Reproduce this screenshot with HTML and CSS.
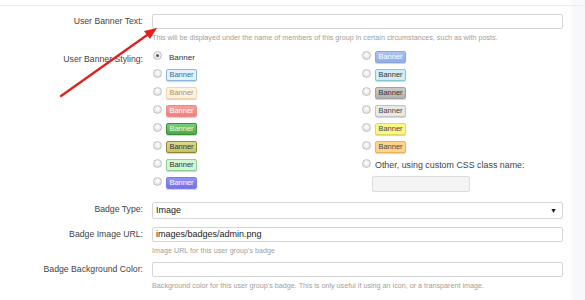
FILE: index.html
```html
<!DOCTYPE html>
<html>
<head>
<meta charset="utf-8">
<link rel="stylesheet" href="styles.css">
</head>
<body>
<div class="page">
  <div class="form">
    <div class="row r-text">
      <div class="label">User Banner Text:</div>
      <div class="ctrl">
        <div class="input"></div>
        <div class="hint">This will be displayed under the name of members of this group in certain circumstances, such as with posts.</div>
      </div>
    </div>
    <div class="row r-style">
      <div class="label">User Banner Styling:</div>
      <div class="ctrl">
        <div class="banners">
          <div class="col">
            <div class="opt"><span class="radio on"></span><span class="plain">Banner</span></div>
            <div class="opt"><span class="radio"></span><span class="bn b-lblue">Banner</span></div>
            <div class="opt"><span class="radio"></span><span class="bn b-peach">Banner</span></div>
            <div class="opt"><span class="radio"></span><span class="bn b-red">Banner</span></div>
            <div class="opt"><span class="radio"></span><span class="bn b-green">Banner</span></div>
            <div class="opt"><span class="radio"></span><span class="bn b-olive">Banner</span></div>
            <div class="opt"><span class="radio"></span><span class="bn b-lgreen">Banner</span></div>
            <div class="opt"><span class="radio"></span><span class="bn b-violet">Banner</span></div>
          </div>
          <div class="col">
            <div class="opt"><span class="radio"></span><span class="bn b-sky">Banner</span></div>
            <div class="opt"><span class="radio"></span><span class="bn b-cyan">Banner</span></div>
            <div class="opt"><span class="radio"></span><span class="bn b-grey">Banner</span></div>
            <div class="opt"><span class="radio"></span><span class="bn b-lgrey">Banner</span></div>
            <div class="opt"><span class="radio"></span><span class="bn b-yellow">Banner</span></div>
            <div class="opt"><span class="radio"></span><span class="bn b-orange">Banner</span></div>
            <div class="opt"><span class="radio"></span><span class="other">Other, using custom CSS class name:</span></div>
            <div class="custom"></div>
          </div>
        </div>
      </div>
    </div>
    <div class="row r-type">
      <div class="label">Badge Type:</div>
      <div class="ctrl">
        <div class="input select"><span>Image</span><span class="caret">&#9660;</span></div>
      </div>
    </div>
    <div class="row r-url">
      <div class="label">Badge Image URL:</div>
      <div class="ctrl">
        <div class="input"><span>images/badges/admin.png</span></div>
        <div class="hint">Image URL for this user group's badge</div>
      </div>
    </div>
    <div class="row r-color">
      <div class="label">Badge Background Color:</div>
      <div class="ctrl">
        <div class="input"></div>
        <div class="hint">Background color for this user group's badge. This is only useful if using an icon, or a transparent image.</div>
      </div>
    </div>
  </div>
  <svg class="arrow" width="585" height="300" viewBox="0 0 585 300">
    <line x1="61" y1="96" x2="150" y2="33" stroke="#e0201e" stroke-width="2.2" stroke-linecap="round"/>
    <polygon points="157,28 144,31 150,39" fill="#e0201e"/>
  </svg>
</div>
</body>
</html>
```
FILE: styles.css
```css
html, body {
  margin: 0;
  padding: 0;
}
body {
  width: 585px;
  height: 300px;
  overflow: hidden;
  background: #ffffff;
  font-family: "Liberation Sans", Arial, sans-serif;
  color: #333;
}
.page {
  position: relative;
  width: 585px;
  height: 300px;
  background: linear-gradient(to right, #ffffff 0, #ffffff 568px, #f7f8fb 575px, #f7f8fb 585px);
}
.page::before {
  content: "";
  display: block;
  height: 5px;
  border-bottom: 1px solid #e6eef3;
}
.form {
  width: 563px;
}
.row {
  display: grid;
  grid-template-columns: 143px 1fr;
  column-gap: 9px;
}
.label {
  text-align: right;
  font-size: 8.7px;
  color: #444;
  line-height: 15px;
}
.input {
  height: 13px;
  border: 1px solid #d6d6d6;
  border-radius: 2px;
  background: #fff;
  font-size: 9px;
  line-height: 13px;
  padding: 0 3px;
  color: #222;
  display: flex;
  align-items: center;
}
.hint {
  font-size: 7.2px;
  color: #a0a0a0;
  margin-top: 4px;
  line-height: 10px;
  white-space: nowrap;
}
.r-text {
  margin-top: 8px;
}
.r-style {
  margin-top: 9px;
}
.r-style .label {
  line-height: 14px;
  margin-top: 0;
}
.banners {
  display: grid;
  grid-template-columns: 209px 1fr;
  padding-left: 1px;
}
.opt {
  height: 18px;
  display: flex;
  align-items: center;
  gap: 3px;
}
.col .opt:first-child {
  margin-top: -4px;
}
.radio {
  width: 7px;
  height: 7px;
  border: 1px solid #c2c2c2;
  border-radius: 50%;
  background: radial-gradient(circle at 50% 40%, #ffffff 0, #e8e8e8 60%, #d4d4d4 100%);
  margin-top: -4px;
  flex: none;
  position: relative;
}
.radio.on::after {
  content: "";
  position: absolute;
  left: 2px;
  top: 2px;
  width: 3px;
  height: 3px;
  border-radius: 50%;
  background: #555;
}
.plain {
  font-size: 8px;
  color: #333;
  margin-left: 4px;
}
.bn {
  width: 29px;
  height: 10px;
  margin-left: 1px;
  box-sizing: content-box;
  border: 1px solid;
  border-radius: 2px;
  font-size: 7.5px;
  line-height: 10px;
  text-align: center;
  box-shadow: 0 1px 1px rgba(0,0,0,0.18);
}
.b-lblue { background: #e6f2fb; border-color: #8bb6d8; color: #3b6c9c; }
.b-peach { background: #fdf1e0; border-color: #f1d6ae; color: #b3916c; }
.b-red { background: linear-gradient(#f7a0a0, #ef7f7f); border-color: #ec8a8a; color: #fff; }
.b-green { background: linear-gradient(#7ccd7c, #4aa84a); border-color: #3a8e3a; color: #e6ffe6; }
.b-olive { background: linear-gradient(#dcd98c, #c6c26a); border-color: #8e8836; color: #333; }
.b-lgreen { background: #d2f5d2; border-color: #8fd08f; color: #333; }
.b-violet { background: linear-gradient(#9292f7, #7272ea); border-color: #7a7ae8; color: #fff; }
.b-sky { background: linear-gradient(#aec3f1, #92ade8); border-color: #8aa6e0; color: #fff; }
.b-cyan { background: #ccedfa; border-color: #86c4dc; color: #333; }
.b-grey { background: linear-gradient(#cacaca, #b2b2b2); border-color: #a2a2a2; color: #333; }
.b-lgrey { background: #e8e8e8; border-color: #c4c4c4; color: #444; }
.b-yellow { background: #f9f98a; border-color: #dcdc5a; color: #444; }
.b-orange { background: #fdd58a; border-color: #eab25a; color: #444; }
.other {
  font-size: 8.9px;
  color: #444;
  margin-left: 1px;
}
.custom {
  width: 96px;
  height: 14px;
  margin-left: 10px;
  margin-top: 2px;
  border: 1px solid #dcdcdc;
  background: #f4f4f4;
  border-radius: 2px;
}
.r-type {
  margin-top: 10px;
}
.select {
  height: 15px;
  justify-content: space-between;
}
.caret {
  font-size: 7px;
  color: #111;
  margin-right: 2px;
}
.r-url {
  margin-top: 8px;
}
.r-color {
  margin-top: 6px;
}
.arrow {
  position: absolute;
  left: 0;
  top: 0;
  pointer-events: none;
}
```
